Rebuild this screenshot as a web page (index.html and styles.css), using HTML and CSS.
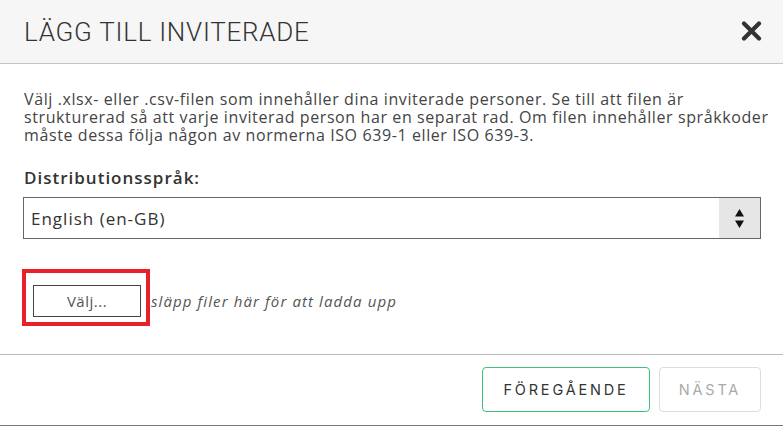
FILE: index.html
```html
<!DOCTYPE html>
<html lang="sv">
<head>
    <meta charset="UTF-8">
    <meta name="viewport" content="width=device-width, initial-scale=1.0">
    <title>Lägg till inviterade</title>
    <link rel="stylesheet" href="styles.css">
</head>
<body>

    <div class="modal">
        <header class="modal-head">
            <h1>LÄGG TILL INVITERADE</h1>
            <button class="close" type="button" aria-label="Stäng">
                <svg width="21" height="20" viewBox="0 0 21 20">
                    <path d="M3 2.5 L18 17.5 M18 2.5 L3 17.5" stroke="#333" stroke-width="4.2" stroke-linecap="round" fill="none"/>
                </svg>
            </button>
        </header>

        <div class="modal-body">
            <p class="intro">Välj .xlsx- eller .csv-filen som innehåller dina inviterade personer. Se till att filen är strukturerad så att varje inviterad person har en separat rad. Om filen innehåller språkkoder måste dessa följa någon av normerna ISO 639-1 eller ISO 639-3.</p>

            <label class="field-label" for="lang">Distributionsspråk:</label>
            <div class="select-wrap">
                <select id="lang">
                    <option>English (en-GB)</option>
                    <option>Svenska (sv-SE)</option>
                </select>
                <span class="arrows">
                    <svg width="11" height="21" viewBox="0 0 11 21">
                        <path d="M5.5 1 L10 8.5 L1 8.5 Z M1 12.5 L10 12.5 L5.5 20 Z" fill="#111"/>
                    </svg>
                </span>
            </div>

            <div class="upload">
                <div class="highlight">
                    <button class="pick" type="button">Välj...</button>
                </div>
                <span class="drop">släpp filer här för att ladda upp</span>
            </div>
        </div>

        <footer class="modal-foot">
            <button class="btn prev" type="button">FÖREGÅENDE</button>
            <button class="btn next" type="button" disabled>NÄSTA</button>
        </footer>
    </div>

</body>
</html>
```

FILE: styles.css
```css
html, body {
    margin: 0;
    padding: 0;
}
body {
    font-family: "Open Sans", "Liberation Sans", sans-serif;
    color: #444;
    background: #fff;
}
.modal {
    width: 783px;
    height: 426px;
    box-sizing: border-box;
    border-bottom: 1px solid #777;
    display: flex;
    flex-direction: column;
}
.modal-head {
    height: 63px;
    background: #f6f6f6;
    border-bottom: 1px solid #c4c4c4;
    display: flex;
    align-items: center;
    justify-content: space-between;
    padding: 0 21px 0 24px;
}
.modal-head h1 {
    margin: 0;
    font-family: Roboto, sans-serif;
    font-weight: 300;
    font-size: 26px;
    letter-spacing: 0.75px;
    color: #333;
}
.close {
    border: none;
    background: none;
    padding: 0;
    width: 21px;
    height: 20px;
    cursor: pointer;
    margin-top: -2px;
}
.close svg {
    display: block;
}
.modal-body {
    flex: 1;
    padding: 0 22px 0 23px;
    border-bottom: 1px solid #bbb;
}
.intro {
    margin: 26px -16px 0 1px;
    font-size: 16px;
    line-height: 18px;
    letter-spacing: 0.6px;
    color: #444;
}
.field-label {
    display: block;
    margin: 24px 0 0 1px;
    font-size: 17px;
    line-height: 20px;
    font-weight: 600;
    letter-spacing: 1px;
    color: #333;
}
.select-wrap {
    position: relative;
    margin-top: 9px;
    height: 42px;
}
.select-wrap select {
    width: 100%;
    height: 42px;
    margin: 0;
    border: 1px solid #666;
    border-radius: 0;
    background: #fff;
    appearance: none;
    -webkit-appearance: none;
    padding: 0 50px 0 7px;
    font-family: "Open Sans", sans-serif;
    font-size: 17px;
    letter-spacing: 1px;
    color: #333;
}
.arrows {
    position: absolute;
    top: 1px;
    right: 1px;
    bottom: 1px;
    width: 41px;
    background: #e6e6e6;
    display: flex;
    align-items: center;
    justify-content: center;
    pointer-events: none;
}
.arrows svg {
    display: block;
}
.upload {
    display: flex;
    align-items: center;
    margin-top: 30px;
}
.highlight {
    border: 4px solid #e8202a;
    padding: 12px 5px 5px 7px;
    margin-left: -1px;
}
.pick {
    width: 108px;
    height: 32px;
    border: 1px solid #444;
    border-radius: 0;
    background: #fff;
    font-family: "Open Sans", sans-serif;
    font-size: 15px;
    letter-spacing: 0.5px;
    color: #555;
    cursor: pointer;
}
.drop {
    margin-left: 1px;
    margin-top: 7px;
    font-size: 15px;
    font-style: italic;
    letter-spacing: 1.1px;
    color: #555;
}
.modal-foot {
    height: 70px;
    box-sizing: border-box;
    display: flex;
    justify-content: flex-end;
    align-items: flex-start;
    gap: 9px;
    padding: 12px 22px 0 0;
}
.btn {
    height: 45px;
    border-radius: 4px;
    background: #fff;
    font-family: Inter, sans-serif;
    font-size: 14.5px;
    letter-spacing: 2.8px;
    cursor: pointer;
}
.prev {
    width: 168px;
    border: 1px solid #3cc47a;
    color: #333;
}
.next {
    width: 102px;
    border: 1px solid #ddd;
    color: #aaa;
    cursor: default;
}
```
